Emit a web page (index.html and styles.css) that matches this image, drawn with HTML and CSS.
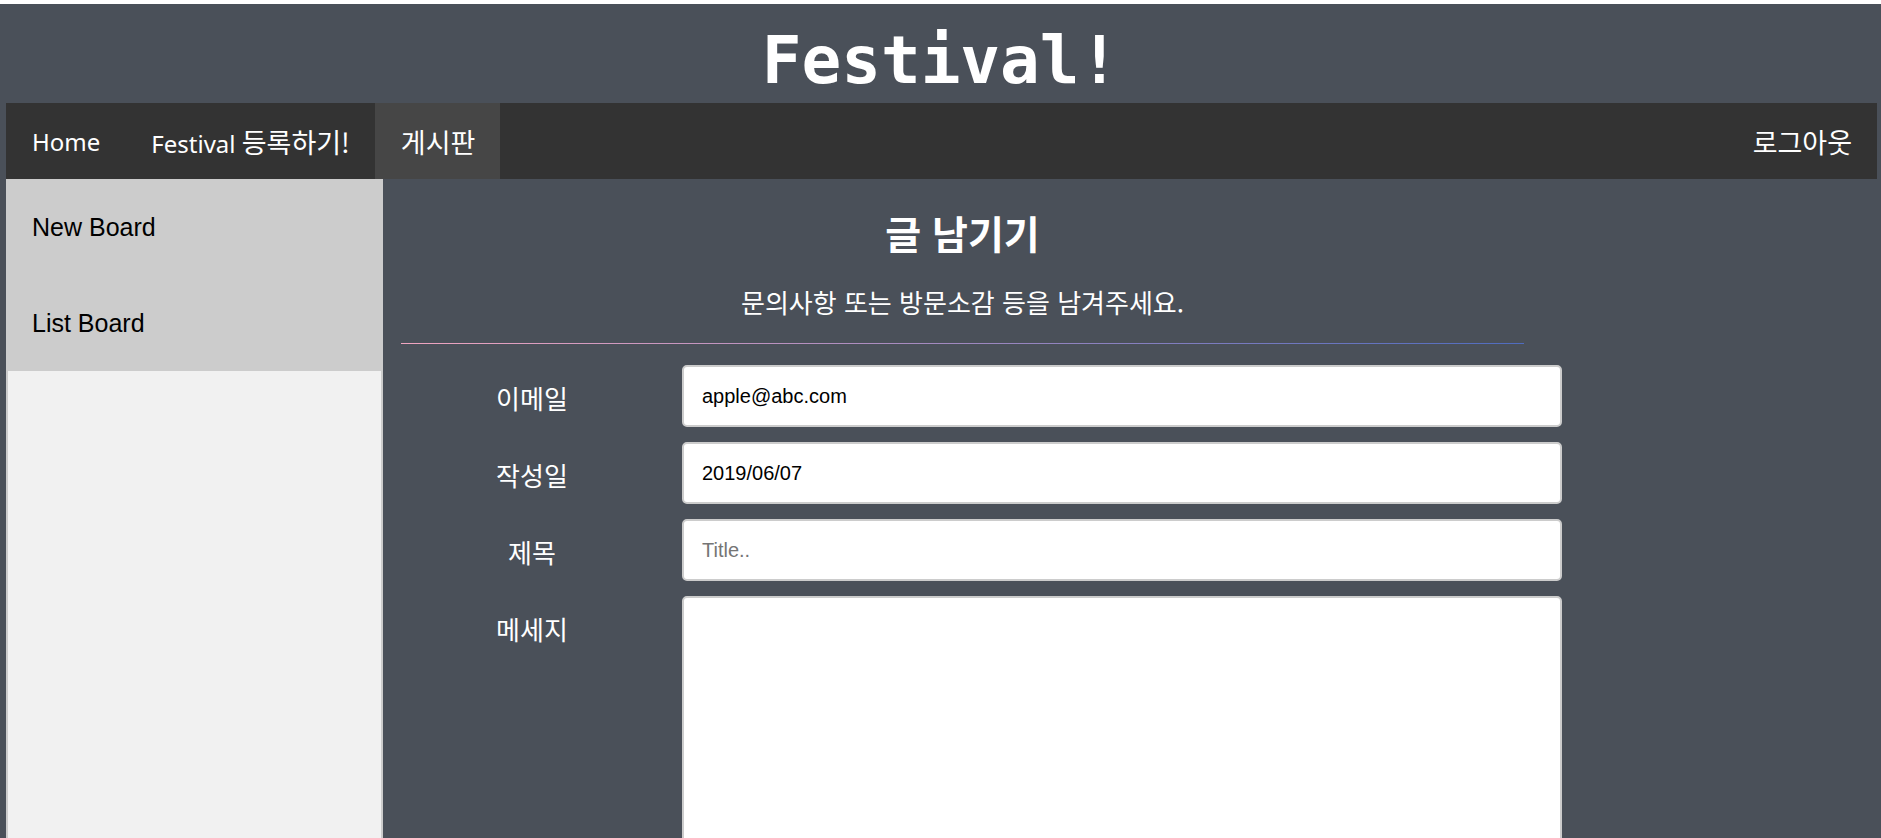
FILE: index.html
```html
<!DOCTYPE html>
<html lang="ko">
<head>
<meta charset="utf-8">
<title>Festival!</title>
<link rel="stylesheet" href="styles.css">
</head>
<body>
  <header class="site-header">
    <h1 class="site-title">Festival!</h1>
  </header>
  <nav class="topnav">
    <a class="nav-link" href="#">Home</a>
    <a class="nav-link" href="#">Festival <span class="ko">등록하기!</span></a>
    <a class="nav-link active" href="#"><span class="ko">게시판</span></a>
    <a class="nav-link nav-right" href="#"><span class="ko">로그아웃</span></a>
  </nav>
  <div class="layout">
    <aside class="sidebar">
      <a class="side-link" href="#">New Board</a>
      <a class="side-link" href="#">List Board</a>
    </aside>
    <main class="content">
      <div class="intro">
        <h2 class="page-title">글 남기기</h2>
        <p class="page-sub">문의사항 또는 방문소감 등을 남겨주세요.</p>
        <hr class="divider">
      </div>
      <form class="board-form">
        <label class="field-label" for="email">이메일</label>
        <input class="field-input" id="email" type="text" value="apple@abc.com">
        <label class="field-label" for="date">작성일</label>
        <input class="field-input" id="date" type="text" value="2019/06/07">
        <label class="field-label" for="title">제목</label>
        <input class="field-input" id="title" type="text" placeholder="Title..">
        <label class="field-label" for="msg">메세지</label>
        <textarea class="field-input field-area" id="msg"></textarea>
      </form>
    </main>
  </div>
</body>
</html>
```
FILE: styles.css
```css
html {
  background: #ffffff;
  overflow: hidden;
  height: 100%;
}
body {
  margin: 4px 0 0 0;
  height: calc(100vh - 4px);
  background: #4a5059;
  display: flex;
  flex-direction: column;
  font-family: "Noto Sans", "Noto Sans CJK KR", sans-serif;
  color: #ffffff;
  overflow: hidden;
}
.site-header {
  height: 99px;
  box-sizing: border-box;
  padding-top: 25px;
  flex: none;
}
.site-title {
  margin: 0;
  text-align: center;
  font-family: "DejaVu Sans Mono", monospace;
  font-weight: bold;
  font-size: 66px;
  line-height: 64px;
  color: #ffffff;
}
.topnav {
  flex: none;
  display: flex;
  height: 76px;
  margin: 0 4px 0 6px;
  background: #333333;
}
.nav-link {
  display: block;
  padding: 0 25px 0 26px;
  font-size: 24px;
  line-height: 78px;
  height: 76px;
  color: #ffffff;
  text-decoration: none;
  white-space: nowrap;
}
.ko {
  font-family: "Noto Sans CJK KR", sans-serif;
  font-size: 27px;
}
.nav-link.active {
  background: #464646;
}
.nav-right {
  margin-left: auto;
  padding: 0 25px 0 25px;
}
.layout {
  flex: 1;
  display: flex;
  min-height: 0;
  padding-left: 6px;
}
.sidebar {
  flex: none;
  width: 377px;
  box-sizing: border-box;
  border: 2px solid #cccccc;
  border-top: 0;
  border-bottom: 0;
  background: #f1f1f1;
  display: flex;
  flex-direction: column;
}
.side-link {
  display: block;
  background: #cccccc;
  color: #000000;
  text-decoration: none;
  font-family: "Liberation Sans", Arial, sans-serif;
  font-size: 25px;
  line-height: 96px;
  height: 96px;
  padding-left: 24px;
}
.content {
  flex: 1;
  padding-left: 18px;
  min-width: 0;
}
.intro {
  width: 1123px;
  text-align: center;
}
.page-title {
  margin: 29px 0 0 0;
  font-family: "Noto Sans CJK KR", sans-serif;
  font-weight: bold;
  font-size: 39px;
  line-height: 48px;
}
.page-sub {
  margin: 30px 0 0 0;
  font-family: "Noto Sans CJK KR", sans-serif;
  font-size: 26px;
  line-height: 32px;
}
.divider {
  margin: 25px 0 0 0;
  height: 1px;
  border: 0;
  background: linear-gradient(to right, #f0a5c0, #4f6cbf);
}
.board-form {
  margin-top: 21px;
  display: grid;
  grid-template-columns: 262px 880px;
  grid-auto-rows: 62px;
  column-gap: 19px;
  row-gap: 15px;
}
.field-label {
  text-align: center;
  font-family: "Noto Sans CJK KR", sans-serif;
  font-size: 26px;
  line-height: 30px;
  padding-top: 18px;
}
.field-input {
  box-sizing: border-box;
  width: 880px;
  height: 62px;
  border: 2px solid #cccccc;
  border-radius: 5px;
  background: #ffffff;
  padding: 0 18px;
  font-family: "Liberation Sans", Arial, sans-serif;
  font-size: 20px;
  color: #000000;
  outline: none;
}
.field-input::placeholder {
  color: #757575;
}
.field-area {
  height: 320px;
  resize: none;
  padding: 16px 18px;
}
```
